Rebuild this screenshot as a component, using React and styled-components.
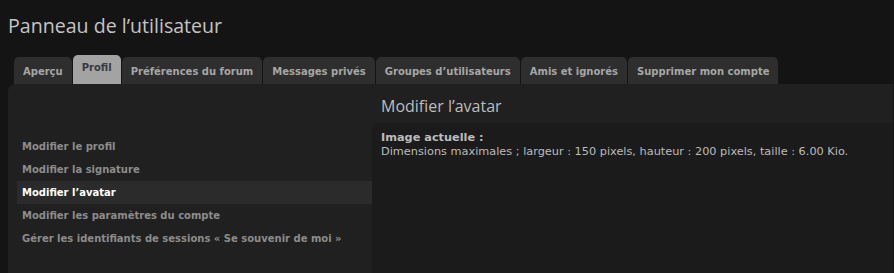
import React from 'react';
import styled, { createGlobalStyle } from 'styled-components';

const GlobalStyle = createGlobalStyle`
  html, body {
    margin: 0;
    padding: 0;
    background: #141414;
    height: 100%;
    overflow: hidden;
  }
  body {
    font-family: "DejaVu Sans", Verdana, sans-serif;
  }
`;

const Page = styled.div`
  padding: 0 0 0 8px;
  height: 273px;
  display: flex;
  flex-direction: column;
`;

const Title = styled.h2`
  margin: 0;
  padding: 12px 0 0 0;
  height: 44px;
  box-sizing: border-box;
  font-family: "Open Sans", sans-serif;
  font-weight: normal;
  font-size: 19.6px;
  color: #c4c4c4;
`;

const Tabs = styled.ul`
  list-style: none;
  margin: 0;
  padding: 0 0 0 6px;
  display: flex;
  align-items: flex-end;
  gap: 1px;
  height: 40px;
`;

const Tab = styled.li`
  background: ${p => (p.$active ? '#a3a3a3' : '#2e2e2e')};
  color: ${p => (p.$active ? '#343a42' : '#a6a6a6')};
  font-weight: bold;
  font-size: 10px;
  height: ${p => (p.$active ? '29px' : '27px')};
  line-height: ${p => (p.$active ? '25px' : '29px')};
  padding: 0 9px;
  border-radius: 5px 5px 0 0;
  white-space: nowrap;
`;

const Panel = styled.div`
  flex: 1;
  display: flex;
  background: #202020;
  border-radius: 7px 0 0 0;
  margin-right: 1px;
`;

const Sidebar = styled.ul`
  list-style: none;
  margin: 0;
  width: 364px;
  padding: 51px 0 0 9px;
  box-sizing: border-box;
`;

const MenuItem = styled.li`
  height: 23px;
  line-height: 23px;
  padding-left: 5px;
  font-size: 10px;
  font-weight: bold;
  color: ${p => (p.$active ? '#ffffff' : '#8c8c8c')};
  background: ${p => (p.$active ? '#2b2b2b' : 'transparent')};
  white-space: nowrap;
`;

const Main = styled.div`
  flex: 1;
  display: flex;
  flex-direction: column;
`;

const Heading = styled.h3`
  margin: 0;
  padding: 0 0 0 9px;
  height: 39px;
  line-height: 44px;
  font-family: "Open Sans", sans-serif;
  font-weight: normal;
  font-size: 16px;
  color: #bdbdbd;
`;

const ContentBox = styled.div`
  flex: 1;
  background: #1b1b1b;
  border-radius: 7px 0 0 0;
  padding: 8px 9px;
  font-size: 11.3px;
  color: #bcbcbc;
  line-height: 14px;
`;

const Label = styled.div`
  font-weight: bold;
`;

const tabs = [
  'Aperçu',
  'Profil',
  'Préférences du forum',
  'Messages privés',
  'Groupes d’utilisateurs',
  'Amis et ignorés',
  'Supprimer mon compte',
];

const menu = [
  'Modifier le profil',
  'Modifier la signature',
  'Modifier l’avatar',
  'Modifier les paramètres du compte',
  'Gérer les identifiants de sessions « Se souvenir de moi »',
];

export default function App() {
  return (
    <>
      <GlobalStyle />
      <Page>
        <Title>Panneau de l’utilisateur</Title>
        <Tabs>
          {tabs.map(label => (
            <Tab key={label} $active={label === 'Profil'}>
              {label}
            </Tab>
          ))}
        </Tabs>
        <Panel>
          <Sidebar>
            {menu.map(item => (
              <MenuItem key={item} $active={item === 'Modifier l’avatar'}>
                {item}
              </MenuItem>
            ))}
          </Sidebar>
          <Main>
            <Heading>Modifier l’avatar</Heading>
            <ContentBox>
              <Label>Image actuelle :</Label>
              <div>
                Dimensions maximales ; largeur : 150 pixels, hauteur : 200 pixels, taille : 6.00 Kio.
              </div>
            </ContentBox>
          </Main>
        </Panel>
      </Page>
    </>
  );
}
